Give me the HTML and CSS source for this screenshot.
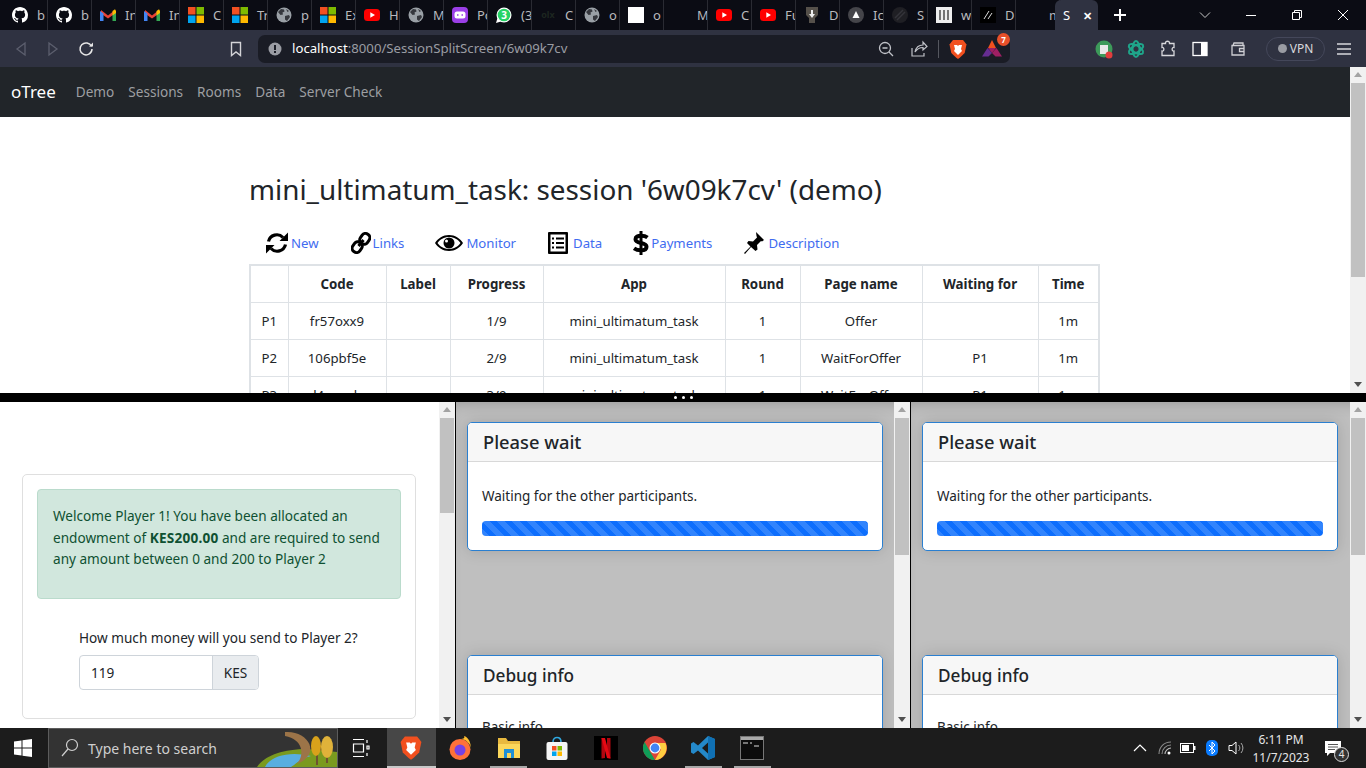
FILE: index.html
```html
<!DOCTYPE html>
<html lang="en">
<head>
  <meta charset="UTF-8">
  <title>oTree split screen</title>
  <link rel="stylesheet" href="styles.css">
</head>
<body>
  <svg class="defs" width="0" height="0">
    <symbol id="gh" viewBox="0 0 16 16"><path fill="#fff" d="M8 0C3.58 0 0 3.58 0 8c0 3.54 2.29 6.53 5.47 7.59.4.07.55-.17.55-.38 0-.19-.01-.82-.01-1.49-2.01.37-2.53-.49-2.69-.94-.09-.23-.48-.94-.82-1.13-.28-.15-.68-.52-.01-.53.63-.01 1.08.58 1.23.82.72 1.21 1.87.87 2.33.66.07-.52.28-.87.51-1.07-1.78-.2-3.64-.89-3.64-3.95 0-.87.31-1.59.82-2.15-.08-.2-.36-1.02.08-2.12 0 0 .67-.21 2.2.82.64-.18 1.32-.27 2-.27.68 0 1.36.09 2 .27 1.53-1.04 2.2-.82 2.2-.82.44 1.1.16 1.92.08 2.12.51.56.82 1.27.82 2.15 0 3.07-1.87 3.75-3.65 3.95.29.25.54.73.54 1.48 0 1.07-.01 1.93-.01 2.2 0 .21.15.46.55.38A8.013 8.013 0 0016 8c0-4.42-3.58-8-8-8z"/></symbol>
    <symbol id="gm" viewBox="0 0 16 16"><path fill="#ea4335" d="M1 3l7 5.500L15 3v3.500L8 11.500 1 6.500z"/><path fill="#4285f4" d="M0 4v10h3.500V6.500z"/><path fill="#34a853" d="M16 4v10h-3.500V6.500z"/><path fill="#fbbc04" d="M12.500 4L15 2.300 16 4v2l-3.500 2.500z"/></symbol>
    <symbol id="ms" viewBox="0 0 16 16"><rect width="7.500" height="7.500" fill="#f25022"/><rect x="8.500" width="7.500" height="7.500" fill="#7fba00"/><rect y="8.500" width="7.500" height="7.500" fill="#00a4ef"/><rect x="8.500" y="8.500" width="7.500" height="7.500" fill="#ffb900"/></symbol>
    <symbol id="yt" viewBox="0 0 16 16"><rect y="2" width="16" height="12" rx="3.500" fill="#f00"/><path fill="#fff" d="M6.300 5.200L11 8l-4.700 2.800z"/></symbol>
    <symbol id="globe" viewBox="0 0 16 16"><circle cx="8" cy="8" r="7.500" fill="#9aa0a6"/><path fill="#35373d" d="M2 5l3-3 3 .5.500 2-2 1 .5 2-2.500.5zM9 9l4-1 1 2-3 4-2-1.500zM10 2l3 2-1.500 1z"/></symbol>
  </svg>

  <div class="tabstrip">
    <div class="tab"><svg class="fav"><use href="#gh"/></svg><span>b</span></div>
    <div class="tab"><svg class="fav"><use href="#gh"/></svg><span>b</span></div>
    <div class="tab"><svg class="fav"><use href="#gm"/></svg><span>In</span></div>
    <div class="tab"><svg class="fav"><use href="#gm"/></svg><span>In</span></div>
    <div class="tab"><svg class="fav"><use href="#ms"/></svg><span>C</span></div>
    <div class="tab"><svg class="fav"><use href="#ms"/></svg><span>Tr</span></div>
    <div class="tab"><svg class="fav"><use href="#globe"/></svg><span>p</span></div>
    <div class="tab"><svg class="fav"><use href="#ms"/></svg><span>Ex</span></div>
    <div class="tab"><svg class="fav"><use href="#yt"/></svg><span>H</span></div>
    <div class="tab"><svg class="fav"><use href="#globe"/></svg><span>M</span></div>
    <div class="tab"><svg class="fav" viewBox="0 0 16 16"><rect width="16" height="16" rx="4" fill="#9b3fe8"/><rect x="2.500" y="4.500" width="11" height="7" rx="2.500" fill="#fff"/><path stroke="#9b3fe8" stroke-width="1.500" d="M5 8h1.500M9.500 8H11"/></svg><span>Po</span></div>
    <div class="tab"><svg class="fav" viewBox="0 0 16 16"><circle cx="8" cy="8" r="7.500" fill="#fff"/><path fill="#fff" d="M0 16l1.500-5 3.500 3.500z"/><circle cx="8" cy="8" r="6.300" fill="#25d366"/><text x="8" y="11.500" class="fav-num">3</text></svg><span>(3</span></div>
    <div class="tab"><svg class="fav" viewBox="0 0 16 16"><text x="8" y="11" class="fav-olx">olx</text></svg><span>C</span></div>
    <div class="tab"><svg class="fav"><use href="#globe"/></svg><span>o</span></div>
    <div class="tab"><svg class="fav" viewBox="0 0 16 16"><rect width="16" height="16" fill="#fff"/></svg><span>o</span></div>
    <div class="tab"><svg class="fav"></svg><span>M</span></div>
    <div class="tab"><svg class="fav"><use href="#yt"/></svg><span>C</span></div>
    <div class="tab"><svg class="fav"><use href="#yt"/></svg><span>Fu</span></div>
    <div class="tab"><svg class="fav" viewBox="0 0 16 16"><path fill="#55504a" d="M2 0h12v8l-3 3v5H5v-5L2 8z"/><path fill="#eee" d="M7 3h2v4h2l-3 4-3-4h2z"/></svg><span>D</span></div>
    <div class="tab"><svg class="fav" viewBox="0 0 16 16"><circle cx="8" cy="8" r="8" fill="#45454a"/><path fill="#fff" d="M8 4l3.500 7h-7z"/></svg><span>Ic</span></div>
    <div class="tab"><svg class="fav" viewBox="0 0 16 16"><circle cx="8" cy="8" r="8" fill="#1f1f24"/><path stroke="#34343a" stroke-width="1.500" d="M3 11l8-8M5 13l8-8"/></svg><span>S</span></div>
    <div class="tab"><svg class="fav" viewBox="0 0 16 16"><rect width="16" height="16" fill="#eee"/><path stroke="#666" stroke-width="1.800" d="M4 3v10M8 3v10M12 3v10"/></svg><span>w</span></div>
    <div class="tab"><svg class="fav" viewBox="0 0 16 16"><rect width="16" height="16" fill="#000"/><path stroke="#ddd" d="M4 12l5-8M8 12l4-6"/></svg><span>D</span></div>
    <div class="tab"><svg class="fav"></svg><span>m</span></div>
    <div class="tab tab-active"><span>S</span><b>✕</b></div>
    <div class="new-tab">
      <svg width="14" height="14" viewBox="0 0 14 14"><path stroke="#fff" stroke-width="2" d="M7 1v12M1 7h12"/></svg>
    </div>
    <div class="win-controls">
      <svg width="12" height="12" viewBox="0 0 12 12"><path fill="none" stroke="#c8c8c8" d="M1 3.500l5 5 5-5"/></svg>
      <svg width="12" height="12" viewBox="0 0 12 12"><path stroke="#fff" d="M1 6.500h10"/></svg>
      <svg width="12" height="12" viewBox="0 0 12 12"><path fill="none" stroke="#fff" d="M1.500 3.500h7v7h-7zM3.500 3.500v-2h7v7h-2"/></svg>
      <svg width="12" height="12" viewBox="0 0 12 12"><path stroke="#fff" d="M1 1l10 10M11 1L1 11"/></svg>
    </div>
  </div>

  <div class="toolbar">
    <svg class="tb-icon" width="32" height="18" viewBox="0 0 32 18"><path fill="none" stroke="#5c5f6e" stroke-width="1.300" d="M20 3v12l-8-6z"/></svg>
    <svg class="tb-icon" width="32" height="18" viewBox="0 0 32 18"><path fill="none" stroke="#5c5f6e" stroke-width="1.300" d="M12 3v12l8-6z"/></svg>
    <svg class="tb-icon reload" width="32" height="18" viewBox="0 0 32 18"><path fill="none" stroke="#e6e6e6" stroke-width="1.500" d="M21.500 6.500A6 6 0 1 0 22 9"/><path fill="#e6e6e6" d="M19 6.500h4v-4z"/></svg>
    <svg class="tb-icon bookmark" width="32" height="18" viewBox="0 0 32 18"><path fill="none" stroke="#d4d4d8" stroke-width="1.400" d="M11.500 2.500h9v13L16 12l-4.500 3.500z"/></svg>
    <div class="urlbar">
      <svg width="14" height="14" viewBox="0 0 14 14"><circle cx="7" cy="7" r="6.500" fill="#9a9ca3"/><rect x="6" y="3" width="2" height="5" fill="#1a1c25"/><rect x="6" y="9" width="2" height="2" fill="#1a1c25"/></svg>
      <div class="url"><b>localhost</b>:8000/SessionSplitScreen/6w09k7cv</div>
      <svg class="url-zoom" width="16" height="16" viewBox="0 0 16 16"><circle cx="7" cy="7" r="5.500" fill="none" stroke="#c0c2c8" stroke-width="1.300"/><path stroke="#c0c2c8" stroke-width="1.300" d="M11 11l4 4M4.500 7h5"/></svg>
      <svg class="url-share" width="18" height="18" viewBox="0 0 18 18"><path fill="none" stroke="#c0c2c8" stroke-width="1.200" d="M2 8v8h12v-3M5 12c1-5 4-7 8-7V2l4 4.500L13 10V7.500c-3 0-6 1.500-8 4.500z"/></svg>
      <i class="url-sep"></i>
      <svg class="url-brave" width="18" height="20" viewBox="0 0 18 20"><path fill="#f1501f" d="M4 1h10l2 2.500 1.500 2-1.800 8.500-4.700 4.500L9 20l-2-1.500L2.300 14 .5 5.500 2 3.500z"/><path fill="#fff" d="M5 6h3l1 1 1-1h3l-1 4 1 2-4 4-4-4 1-2z"/></svg>
      <div class="bat">
        <svg width="20" height="18" viewBox="0 0 20 18"><path fill="#f1501f" d="M10 0l4 8H6z"/><path fill="#9e1f63" d="M6 8h8l-4 5z"/><path fill="#662d91" d="M5.500 8L10 13l-3.500 3.500H0z"/><path fill="#9e1f63" d="M14.500 8L10 13l3.500 3.500H20z"/></svg>
        <span class="bat-badge">7</span>
      </div>
    </div>
    <div class="tb-right">
      <svg class="tr-ext" width="18" height="20" viewBox="0 0 18 20"><circle cx="9" cy="10" r="8.500" fill="#3d9a5a"/><rect x="5" y="6" width="8" height="9" fill="#e9e9e9"/><circle cx="14" cy="16" r="3.500" fill="#e23d3d"/></svg>
      <svg class="tr-gpt" width="18" height="20" viewBox="0 0 18 20"><g fill="none" stroke="#1fa58a" stroke-width="2"><ellipse cx="9" cy="10" rx="3.500" ry="8"/><ellipse cx="9" cy="10" rx="3.500" ry="8" transform="rotate(60 9 10)"/><ellipse cx="9" cy="10" rx="3.500" ry="8" transform="rotate(120 9 10)"/></g></svg>
      <svg class="tr-puz" width="16" height="18" viewBox="0 0 16 18"><path fill="none" stroke="#d8d8dc" stroke-width="1.300" d="M5.500 3.500C5 .5 10 .5 9.500 3.500H14v4c-2.500-.5-2.500 4 0 3.500v4.500H2V11c2.500.5 2.500-4 0-3.500v-4z"/></svg>
      <svg class="tr-side" width="16" height="16" viewBox="0 0 16 16"><rect x="1" y="1.500" width="14" height="13" fill="none" stroke="#fff" stroke-width="1.300"/><rect x="9" y="2" width="6" height="12" fill="#fff"/></svg>
      <svg class="tr-wal" width="16" height="16" viewBox="0 0 16 16"><path fill="none" stroke="#cfcfd4" stroke-width="1.300" d="M2 4.500V14h12V4.500zM3 4.500L4 2h9v2.500M14 7.500H9.500v3H14"/></svg>
      <div class="vpn"><i></i>VPN</div>
      <svg class="tr-menu" width="16" height="14" viewBox="0 0 16 14"><path stroke="#d8d8dc" stroke-width="1.300" d="M1 2h14M1 7h14M1 12h14"/></svg>
    </div>
  </div>

  <div class="top-pane">
    <div class="top-scroll">
      <nav class="navbar">
        <span class="brand">oTree</span>
        <a>Demo</a><a>Sessions</a><a>Rooms</a><a>Data</a><a>Server Check</a>
      </nav>
      <div class="container">
        <h3>mini_ultimatum_task: session '6w09k7cv' (demo)</h3>
        <ul class="session-tabs">
          <li class="st-new">
            <svg width="24" height="24" viewBox="0 0 24 24"><path fill="none" stroke="#000" stroke-width="3.200" d="M3.500 10.500a8.500 8.500 0 0 1 14.500-4M20.500 13.500a8.500 8.500 0 0 1-14.500 4"/><path d="M23 1.500V10h-8.500zM1 22.500V14h8.500z"/></svg>
            <a>New</a>
          </li>
          <li class="st-links">
            <svg width="20" height="22" viewBox="0 0 20 22"><g fill="none" stroke="#000" stroke-width="3"><rect x="9.500" y="1.500" width="8.500" height="11" rx="4" transform="rotate(35 14 7)"/><rect x="2" y="9.500" width="8.500" height="11" rx="4" transform="rotate(35 6 15)"/></g><path stroke="#000" stroke-width="3" d="M7.500 14l5-6"/></svg>
            <a>Links</a>
          </li>
          <li class="st-monitor">
            <svg width="28" height="18" viewBox="0 0 28 18"><path d="M14 1C8 1 3 4.500 0 9c3 4.500 8 8 14 8s11-3.500 14-8c-3-4.500-8-8-14-8zm0 14c-5 0-9-2.500-11.500-6C5 5.500 9 3 14 3s9 2.500 11.500 6C23 12.500 19 15 14 15z"/><circle cx="14" cy="9" r="5.500"/><circle cx="11.500" cy="7" r="1.500" fill="#fff"/></svg>
            <a>Monitor</a>
          </li>
          <li class="st-data">
            <svg width="20" height="22" viewBox="0 0 20 22"><rect width="20" height="22" rx="1"/><rect x="2.500" y="2.500" width="15" height="17" fill="#fff"/><path stroke="#000" stroke-width="2" d="M4 6.500h2M8 6.500h8M4 11h2M8 11h8M4 15.500h2M8 15.500h8"/></svg>
            <a>Data</a>
          </li>
          <li class="st-pay">
            <svg width="16" height="24" viewBox="0 0 16 24"><path fill="none" stroke="#000" stroke-width="4" d="M14.500 6.500C12.500 5 10.500 4.700 8 4.700c-3 0-5.500 1.200-5.500 3.500 0 5.300 11 2.300 11 7.600 0 2.500-2.500 3.500-5.500 3.500-2.500 0-5-.5-7-2"/><path stroke="#000" stroke-width="3" d="M8 0v24"/></svg>
            <a>Payments</a>
          </li>
          <li class="st-desc">
            <svg width="20" height="22" viewBox="0 0 20 22"><path d="M12 0l8 8-2 1.500-1-.5-4 4 .5 4.500-2 1.500L7 15l-6 7-1-1 6.500-6.500L3 11l1.500-2L9 9.500l4-4-.5-1.500z"/></svg>
            <a>Description</a>
          </li>
        </ul>
        <table class="monitor">
          <colgroup><col class="c0"><col class="c1"><col class="c2"><col class="c3"><col class="c4"><col class="c5"><col class="c6"><col class="c7"><col class="c8"></colgroup>
          <tr><th></th><th>Code</th><th>Label</th><th>Progress</th><th>App</th><th>Round</th><th>Page name</th><th>Waiting for</th><th>Time</th></tr>
          <tr><td>P1</td><td>fr57oxx9</td><td></td><td>1/9</td><td>mini_ultimatum_task</td><td>1</td><td>Offer</td><td></td><td>1m</td></tr>
          <tr><td>P2</td><td>106pbf5e</td><td></td><td>2/9</td><td>mini_ultimatum_task</td><td>1</td><td>WaitForOffer</td><td>P1</td><td>1m</td></tr>
          <tr><td>P3</td><td>l4mwxk</td><td></td><td>3/9</td><td>mini_ultimatum_task</td><td>1</td><td>WaitForOffer</td><td>P1</td><td>1m</td></tr>
        </table>
      </div>
    </div>
    <div class="scrollbar sb-top"><s class="up"></s><u></u><s class="down"></s></div>
  </div>

  <div class="divider"><i></i><i></i><i></i></div>

  <div class="frames">
    <div class="frame frame-offer">
      <div class="frame-body">
        <div class="offer-card">
          <div class="alert">Welcome Player 1! You have been allocated an endowment of <b>KES200.00</b> and are required to send any amount between 0 and 200 to Player 2</div>
          <div class="field">
            <label>How much money will you send to Player 2?</label>
            <div class="input-group"><span class="input">119</span><span class="addon">KES</span></div>
          </div>
        </div>
      </div>
      <div class="scrollbar sb-left"><s class="up"></s><u></u><s class="down"></s></div>
    </div>
    <div class="frame frame-wait">
      <div class="frame-body">
        <div class="card">
          <div class="card-header">Please wait</div>
          <div class="card-body">
            <p>Waiting for the other participants.</p>
            <div class="progress"></div>
          </div>
        </div>
        <div class="card card-debug">
          <div class="card-header">Debug info</div>
          <div class="card-body"><p>Basic info</p></div>
        </div>
      </div>
      <div class="scrollbar sb-wait"><s class="up"></s><u></u><s class="down"></s></div>
    </div>
    <div class="frame frame-wait">
      <div class="frame-body">
        <div class="card">
          <div class="card-header">Please wait</div>
          <div class="card-body">
            <p>Waiting for the other participants.</p>
            <div class="progress"></div>
          </div>
        </div>
        <div class="card card-debug">
          <div class="card-header">Debug info</div>
          <div class="card-body"><p>Basic info</p></div>
        </div>
      </div>
      <div class="scrollbar sb-wait"><s class="up"></s><u></u><s class="down"></s></div>
    </div>
  </div>

  <div class="taskbar">
    <svg class="win-logo" width="18" height="18" viewBox="0 0 18 18"><path fill="#fff" d="M0 2.500l7.500-1V8.500H0zM8.500 1.300L18 0v8.500H8.500zM0 9.500h7.500v7L0 15.500zM8.500 9.500H18V18l-9.500-1.300z"/></svg>
    <div class="search">
      <svg width="18" height="20" viewBox="0 0 18 20"><circle cx="11" cy="7" r="5.500" fill="none" stroke="#d0d0d0" stroke-width="1.200"/><path stroke="#d0d0d0" stroke-width="1.200" d="M7 11l-6 7"/></svg>
      <span>Type here to search</span>
      <svg class="search-art" width="80" height="38" viewBox="0 0 80 38">
        <path fill="#7a9a1f" d="M0 38C6 28 24 20 50 20l30 3v15z"/>
        <path fill="#58aee0" d="M8 38c6-12 26-16 46-11-12 3-16 9-20 11z"/>
        <path fill="#9c7448" d="M28 3c22-2 38 21 12 32 8-9 6-25-12-28z"/>
        <path stroke="#6e5230" stroke-width="2" d="M60 24v12M70 24v10"/>
        <ellipse cx="59" cy="17" rx="5" ry="10" fill="#d9a21b"/>
        <ellipse cx="70" cy="18" rx="6" ry="11" fill="#e0b23a"/>
      </svg>
    </div>
    <svg class="task-view" width="20" height="20" viewBox="0 0 20 20"><path fill="none" stroke="#fff" stroke-width="1.200" d="M2 1.500h11M2 18.500h11M2.500 6h10v8h-10zM16 2v3M16 8h2v3h-2zM16 15v3"/></svg>
    <div class="task-app task-active"><svg width="22" height="25" viewBox="0 0 18 20"><path fill="#f1501f" d="M4 1h10l2 2.500 1.500 2-1.800 8.500-4.700 4.500L9 20l-2-1.500L2.300 14 .5 5.500 2 3.500z"/><path fill="#fff" d="M5 6h3l1 1 1-1h3l-1 4 1 2-4 4-4-4 1-2z"/></svg></div>
    <div class="task-app"><svg width="24" height="24" viewBox="0 0 24 24"><circle cx="12" cy="13.500" r="10.500" fill="#ff7139"/><path fill="#ffbd2e" d="M12 3c6 0 11 5 11 10 0-7-3-12-7-13 1 2 0 3-4 3z"/><circle cx="12" cy="14" r="5.500" fill="#7542e5"/></svg></div>
    <div class="task-app task-open"><svg width="24" height="22" viewBox="0 0 24 22"><path fill="#e8b93f" d="M1 1h8l2 3h12v17H1z"/><path fill="#fbd75b" d="M1 7h22v14H1z"/><path fill="#1f8fd6" d="M7 12h10v9h-3v-5h-4v5H7z"/></svg></div>
    <div class="task-app"><svg width="24" height="24" viewBox="0 0 24 24"><path fill="none" stroke="#2fa8e0" stroke-width="1.600" d="M8 6c0-6 8-6 8 0"/><rect x="1.500" y="6" width="21" height="18" rx="2" fill="#f5f5f5"/><rect x="7" y="10" width="4.500" height="4.500" fill="#f25022"/><rect x="12.500" y="10" width="4.500" height="4.500" fill="#7fba00"/><rect x="7" y="15.500" width="4.500" height="4.500" fill="#00a4ef"/><rect x="12.500" y="15.500" width="4.500" height="4.500" fill="#ffb900"/></svg></div>
    <div class="task-app"><svg width="24" height="24" viewBox="0 0 24 24"><rect width="24" height="24" fill="#000"/><path fill="#b1060f" d="M7.500 2H11v20l-3.500.5z"/><path fill="#b1060f" d="M13 2h3.500v20.500L13 22z"/><path fill="#e50914" d="M7.500 2H11l5.500 20.500L13 22z"/></svg></div>
    <div class="task-app"><svg width="24" height="24" viewBox="0 0 24 24"><circle cx="12" cy="12" r="12" fill="#db4437"/><path fill="#0f9d58" d="M12 24A12 12 0 0 1 1.600 6L7 15.500z"/><path fill="#ffcd40" d="M12 24L18 13.500 12 7h10.500A12 12 0 0 1 12 24z"/><circle cx="12" cy="12" r="5.500" fill="#fff"/><circle cx="12" cy="12" r="4.400" fill="#4285f4"/></svg></div>
    <div class="task-app task-open"><svg width="24" height="24" viewBox="0 0 24 24"><path fill="#2489ca" d="M17 0l7 3v18l-7 3-10-9.500L2.500 18 0 16.500v-9L2.500 6 7 9.500zM17 6.500L11 12l6 5.500z"/><path fill="#1070b3" d="M17 0l7 3v18l-7 3z"/></svg></div>
    <div class="task-app task-open"><svg width="24" height="24" viewBox="0 0 24 24"><rect x=".5" y=".5" width="23" height="23" fill="#0c0c0c" stroke="#777"/><rect x="1" y="1" width="22" height="3" fill="#aaa"/><path stroke="#ddd" d="M3 7h5M10 7h2M14 10h5"/></svg></div>
    <div class="tray">
      <svg class="tray-up" width="14" height="8" viewBox="0 0 14 8"><path fill="none" stroke="#fff" stroke-width="1.200" d="M1 7l6-6 6 6"/></svg>
      <svg class="tray-wifi" width="14" height="14" viewBox="0 0 14 14"><path fill="none" stroke="#8a8a8a" stroke-width="1.100" d="M1 13C1 6 6 1 13 1M4 13c0-5 4-9 9-9"/><path fill="none" stroke="#bbb" stroke-width="1.100" d="M7 13c0-3 3-6 6-6"/><circle cx="11" cy="12" r="1.500" fill="#fff"/></svg>
      <svg class="tray-bat" width="16" height="10" viewBox="0 0 16 10"><rect x=".5" y=".5" width="13" height="9" fill="none" stroke="#fff"/><rect x="2" y="2" width="7" height="6" fill="#fff"/><rect x="14" y="3" width="1.500" height="4" fill="#fff"/></svg>
      <svg class="tray-bt" width="12" height="16" viewBox="0 0 12 16"><rect width="12" height="16" rx="5" fill="#0a7cff"/><path fill="none" stroke="#fff" d="M3 5l6 6-3 3V2l3 3-6 6"/></svg>
      <svg class="tray-vol" width="17" height="14" viewBox="0 0 17 14"><path fill="none" stroke="#fff" d="M1 4.500h3L8 1v12L4 9.500H1z"/><path fill="none" stroke="#aaa" d="M10.500 4a4 4 0 0 1 0 6M13 2a7.500 7.500 0 0 1 0 10"/></svg>
      <div class="clock"><span>6:11 PM</span><span>11/7/2023</span></div>
      <div class="notif">
        <svg width="18" height="15" viewBox="0 0 18 15"><path fill="#fff" d="M0 0h16v12H5l-3 3v-3H0z"/><path stroke="#555" d="M3 3.500h10M3 6h10M3 8.500h7"/></svg>
        <span>4</span>
      </div>
    </div>
  </div>
</body>
</html>
```

FILE: styles.css
```css
* {
  box-sizing: border-box;
}
html, body {
  margin: 0;
  height: 100%;
}
body {
  width: 1366px;
  height: 768px;
  overflow: hidden;
  display: flex;
  flex-direction: column;
  font-family: "Noto Sans", "Open Sans", sans-serif;
  font-size: 13.5px;
  color: #212529;
  background: #fff;
}
.defs {
  position: absolute;
}

/* browser tabs */
.tabstrip {
  height: 30px;
  flex: none;
  display: flex;
  align-items: center;
  padding-left: 4px;
  background: #0b0c14;
  color: #b9b9bd;
  font-size: 13px;
}
.tab {
  width: 44px;
  height: 30px;
  flex: none;
  display: flex;
  align-items: center;
  padding-left: 8px;
  overflow: hidden;
  border-right: 1px solid #2a2b33;
  white-space: nowrap;
}
.fav {
  width: 16px;
  height: 16px;
  flex: none;
  margin-right: 9px;
}
.fav-num {
  fill: #fff;
  font-size: 10px;
  font-weight: 700;
  text-anchor: middle;
}
.fav-olx {
  fill: #1d2620;
  font-size: 9px;
  font-weight: 700;
  text-anchor: middle;
}
.tab-active {
  width: 43px;
  margin-left: -5px;
  padding-left: 8px;
  background: #2f3241;
  border: 0;
  border-radius: 6px 6px 0 0;
  color: #fff;
  justify-content: space-between;
  padding-right: 6px;
}
.tab-active b {
  font-weight: 700;
  font-size: 11px;
}
.new-tab {
  width: 22px;
  margin-left: 11px;
  display: flex;
  justify-content: center;
}
.win-controls {
  display: flex;
  margin-left: 68px;
  gap: 34px;
}

/* address bar row */
.toolbar {
  height: 37px;
  flex: none;
  display: flex;
  align-items: center;
  padding-left: 5px;
  background: #2f3241;
}
.reload {
  margin-left: 1px;
}
.bookmark {
  margin-left: 118px;
}
.urlbar {
  width: 752px;
  height: 28px;
  margin-left: 6px;
  display: flex;
  align-items: center;
  padding-left: 10px;
  background: #1a1c25;
  border-radius: 7px;
}
.url {
  margin-left: 10px;
  width: 572px;
  padding-bottom: 2px;
  color: #9a9ca3;
  font-size: 13.200px;
  white-space: nowrap;
}
.url b {
  color: #fff;
  font-weight: 400;
}
.url-zoom {
  margin-left: 14px;
}
.url-share {
  margin-left: 16px;
}
.url-sep {
  width: 1px;
  height: 18px;
  margin-left: 10px;
  background: #55575f;
}
.url-brave {
  margin-left: 10px;
}
.bat {
  position: relative;
  margin-left: 15px;
  display: flex;
}
.bat-badge {
  position: absolute;
  top: -7px;
  right: -8px;
  width: 13px;
  height: 13px;
  border-radius: 50%;
  background: #e8502a;
  color: #fff;
  font-size: 8px;
  font-weight: 700;
  line-height: 13px;
  text-align: center;
}
.tb-right {
  display: flex;
  align-items: center;
}
.tr-ext {
  margin-left: 85px;
}
.tr-gpt {
  margin-left: 14px;
}
.tr-puz {
  margin-left: 15px;
}
.tr-side {
  margin-left: 16px;
}
.tr-wal {
  margin-left: 22px;
}
.vpn {
  width: 59px;
  height: 24px;
  margin-left: 20px;
  display: flex;
  align-items: center;
  justify-content: center;
  gap: 3px;
  border: 1px solid #44475a;
  border-radius: 12px;
  color: #d8d8dc;
  font-size: 12px;
}
.vpn i {
  width: 9px;
  height: 9px;
  border-radius: 50%;
  background: #9a9ca3;
}
.tr-menu {
  margin-left: 11px;
}

/* oTree admin page in the top pane */
.top-pane {
  height: 326px;
  flex: none;
  display: flex;
  overflow: hidden;
}
.top-scroll {
  flex: 1;
  min-width: 0;
  overflow: hidden;
}
.navbar {
  height: 50px;
  display: flex;
  align-items: center;
  padding: 0 0 2px 11px;
  background: #212529;
}
.brand {
  margin-right: 20px;
  color: #fff;
  font-size: 17px;
}
.navbar a {
  margin-right: 14px;
  color: #9d9fa2;
  font-size: 13.6px;
}
.container {
  width: 851px;
  margin-left: 249px;
  padding-top: 55px;
}
h3 {
  margin: 0;
  font-size: 27.850px;
  font-weight: 400;
  line-height: 34px;
}
.session-tabs {
  display: flex;
  align-items: center;
  height: 34px;
  margin: 20px 0 4px;
  padding: 0;
  list-style: none;
}
.session-tabs li {
  display: flex;
  align-items: center;
}
.session-tabs a {
  color: #3f6cf0;
  font-size: 13.2px;
}
.st-new {
  margin-left: 16px;
  gap: 2px;
}
.st-links {
  margin-left: 32px;
  gap: 2px;
}
.st-monitor {
  margin-left: 31px;
  gap: 3px;
}
.st-data {
  margin-left: 32px;
  gap: 5px;
}
.st-pay {
  margin-left: 31px;
  gap: 2px;
}
.st-desc {
  margin-left: 32px;
  gap: 4px;
}
.monitor {
  width: 851px;
  table-layout: fixed;
  border-collapse: collapse;
  border: 2px solid #dee2e6;
}
.c0 { width: 38px; }
.c1 { width: 98px; }
.c2 { width: 64px; }
.c3 { width: 93px; }
.c4 { width: 182px; }
.c5 { width: 75px; }
.c6 { width: 122px; }
.c7 { width: 116px; }
.monitor th, .monitor td {
  height: 36.800px;
  padding: 0;
  border: 1.500px solid #dee2e6;
  text-align: center;
  font-size: 13.200px;
  white-space: nowrap;
}
.monitor th {
  height: 37.800px;
  font-size: 13.300px;
  font-weight: 700;
}

.divider {
  height: 9px;
  flex: none;
  display: flex;
  align-items: center;
  justify-content: center;
  gap: 5px;
  background: #000;
}
.divider i {
  width: 3px;
  height: 3px;
  border-radius: 50%;
  background: #fff;
}

/* the three player frames */
.frames {
  height: 326px;
  flex: none;
  display: flex;
}
.frame {
  display: flex;
  overflow: hidden;
  border-right: 1px solid #000;
}
.frame-offer {
  width: 456px;
}
.frame-wait {
  width: 455px;
  background: #bfbfbf;
  box-shadow: inset 0 10px 14px -8px rgba(0, 0, 0, .2);
}
.frame-wait:last-child {
  border-right: 0;
}
.frame-wait:last-child .frame-body {
  padding-right: 12px;
}
.frame-body {
  flex: 1;
  min-width: 0;
  overflow: hidden;
}
.frame-offer .frame-body {
  padding: 72px 23px 0 22px;
}
.frame-wait .frame-body {
  padding: 20px 11px 0 11px;
}
.offer-card {
  height: 245px;
  padding: 14px 14px;
  border: 1px solid #dfdfdf;
  border-radius: 5px;
}
.alert {
  height: 110px;
  padding: 15px 15px;
  background: #d1e7dd;
  border: 1px solid #badbcc;
  border-radius: 4px;
  color: #0f5132;
  font-size: 13.6px;
  line-height: 21.500px;
}
.alert b {
  letter-spacing: .2px;
}
.field {
  padding: 29px 0 0 42px;
  font-size: 13.6px;
}
.field label {
  display: block;
  margin-bottom: 8px;
}
.input-group {
  display: flex;
  width: 180px;
  height: 35px;
  border: 1px solid #ced4da;
  border-radius: 4px;
  overflow: hidden;
  line-height: 34px;
}
.input {
  flex: 1;
  padding-left: 11px;
}
.addon {
  width: 46px;
  text-align: center;
  background: #e9ecef;
  border-left: 1px solid #ced4da;
}
.card {
  height: 129px;
  background: #fff;
  border: 1px solid #2a7fd0;
  border-radius: 5px;
  box-shadow: 0 0 16px rgba(0, 0, 0, .15);
  overflow: hidden;
}
.card-debug {
  height: 120px;
  margin-top: 104px;
}
.card-header {
  height: 39px;
  padding-left: 15px;
  background: #f7f7f7;
  border-bottom: 1px solid #d8d8d8;
  font-size: 18.300px;
  font-weight: 500;
  line-height: 38px;
}
.card-debug .card-header {
  font-size: 17.200px;
  line-height: 39px;
}
.card-body {
  padding: 25px 14px 0;
}
.card-body p {
  margin: 0;
  line-height: 18px;
}
.progress {
  height: 15px;
  margin-top: 16px;
  border-radius: 4px;
  background-color: #0d6efd;
  background-image: linear-gradient(45deg, rgba(255,255,255,.15) 25%, transparent 25%, transparent 50%, rgba(255,255,255,.15) 50%, rgba(255,255,255,.15) 75%, transparent 75%, transparent);
  background-size: 15px 15px;
}
.card-debug .card-body {
  padding-top: 23px;
}

/* fake scrollbars, the frames do not really scroll */
.scrollbar {
  width: 16px;
  flex: none;
  display: flex;
  flex-direction: column;
  background: #f1f1f1;
}
.scrollbar u {
  display: block;
  margin: 0 1px;
  background: #c1c1c1;
}
.scrollbar s {
  height: 16px;
  flex: none;
  position: relative;
}
.scrollbar .down {
  margin-top: auto;
}
.scrollbar s::before {
  content: "";
  position: absolute;
  left: 4px;
  top: 5px;
  border-left: 4px solid transparent;
  border-right: 4px solid transparent;
}
.scrollbar .up::before {
  border-bottom: 5px solid #a3a3a3;
}
.scrollbar .down::before {
  border-top: 5px solid #505050;
}
.sb-top u { height: 194px; }
.sb-left u { height: 95px; }
.sb-wait u { height: 137px; }

/* windows taskbar */
.taskbar {
  height: 40px;
  flex: none;
  display: flex;
  align-items: center;
  background: #1c1c1c;
  color: #e6e6e6;
}
.win-logo {
  margin-left: 14px;
}
.search {
  width: 290px;
  height: 40px;
  margin-left: 16px;
  display: flex;
  align-items: center;
  padding-left: 12px;
  background: #333;
  border: 1px solid #5c5c5c;
  color: #cfcfcf;
  font-size: 14px;
  overflow: hidden;
}
.search span {
  margin-left: 9px;
  white-space: nowrap;
}
.search-art {
  margin-left: auto;
  flex: none;
}
.task-view {
  margin-left: 13px;
}
.task-app {
  position: relative;
  width: 48.700px;
  height: 40px;
  flex: none;
  display: flex;
  align-items: center;
  justify-content: center;
}
.task-active {
  margin-left: 16px;
  background: #474747;
  border-bottom: 2px solid #c8c8c8;
}
.task-open::after {
  content: "";
  position: absolute;
  left: 6px;
  right: 6px;
  bottom: 0;
  height: 2px;
  background: #a8a8a8;
}
.tray {
  display: flex;
  align-items: center;
  margin-left: auto;
  height: 40px;
}
.tray-wifi { margin-left: 11px; }
.tray-bat { margin-left: 8px; }
.tray-bt { margin-left: 10px; }
.tray-vol { margin-left: 10px; }
.clock {
  width: 66px;
  margin-left: 3px;
  padding-top: 1px;
  display: flex;
  flex-direction: column;
  align-items: center;
  font-size: 12px;
  line-height: 18px;
}
.notif {
  position: relative;
  width: 46px;
  height: 40px;
  display: flex;
  align-items: center;
  padding-left: 5px;
  margin-left: 6px;
}
.notif span {
  position: absolute;
  left: 14px;
  top: 19px;
  width: 15px;
  height: 15px;
  border-radius: 50%;
  border: 1px solid #ddd;
  background: #333;
  font-size: 10px;
  line-height: 13px;
  text-align: center;
}
```
